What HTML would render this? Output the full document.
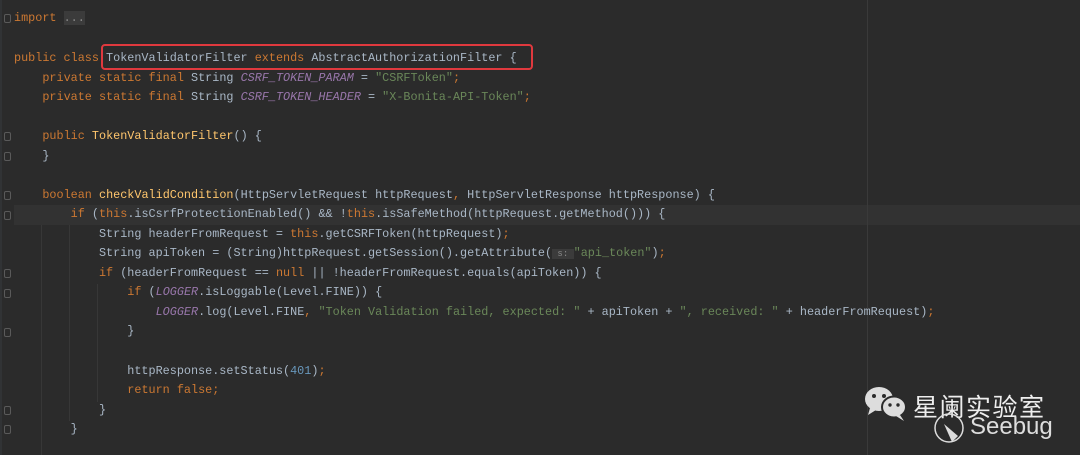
<!DOCTYPE html>
<html><head><meta charset="utf-8"><style>
body{margin:0;width:1080px;height:455px;background:#2b2b2b;overflow:hidden;position:relative;font-family:"Liberation Mono",monospace;font-size:11.8px;}
.l{position:absolute;left:14px;white-space:pre;color:#a9b7c6;height:19.6px;line-height:19.6px}
.k{color:#cc7832}.s{color:#6a8759}.c{color:#9876aa;font-style:italic}.m{color:#ffc66d}.n{color:#6897bb}
.g{position:absolute;width:1px;background:#373737}
.f{position:absolute;left:4px;width:7px;height:9px;border:1px solid #5a5a5a;border-radius:2px;box-sizing:border-box}
</style></head><body>
<div style="position:absolute;left:0;top:0;width:2px;height:455px;background:#313335"></div>
<div style="position:absolute;left:14px;top:205px;width:1066px;height:20px;background:#323232"></div>
<div class="g" style="left:867px;top:0;height:455px;background:#3a3a3a"></div>
<div class="g" style="left:41px;top:225px;height:230px"></div>
<div class="g" style="left:69px;top:225px;height:196px"></div>
<div class="g" style="left:97px;top:284px;height:118px"></div>
<div class="f" style="top:14px"></div>
<div class="f" style="top:132px"></div><div class="f" style="top:152px"></div>
<div class="f" style="top:191px"></div><div class="f" style="top:211px"></div>
<div class="f" style="top:269px"></div><div class="f" style="top:289px"></div>
<div class="f" style="top:328px"></div><div class="f" style="top:406px"></div><div class="f" style="top:425px"></div>
<div class="l" style="top:9px"><span class="k">import</span> <span style="background:#3b3b3b;color:#888">...</span></div>
<div class="l" style="top:49px"><span class="k">public class</span> TokenValidatorFilter <span class="k">extends</span> AbstractAuthorizationFilter {</div>
<div class="l" style="top:69px">    <span class="k">private static final</span> String <span class="c">CSRF_TOKEN_PARAM</span> = <span class="s">"CSRFToken"</span><span class="k">;</span></div>
<div class="l" style="top:88px">    <span class="k">private static final</span> String <span class="c">CSRF_TOKEN_HEADER</span> = <span class="s">"X-Bonita-API-Token"</span><span class="k">;</span></div>
<div class="l" style="top:127px">    <span class="k">public</span> <span class="m">TokenValidatorFilter</span>() {</div>
<div class="l" style="top:147px">    }</div>
<div class="l" style="top:186px">    <span class="k">boolean</span> <span class="m">checkValidCondition</span>(HttpServletRequest httpRequest<span class="k">,</span> HttpServletResponse httpResponse) {</div>
<div class="l" style="top:205px">        <span class="k">if</span> (<span class="k">this</span>.isCsrfProtectionEnabled() &amp;&amp; !<span class="k">this</span>.isSafeMethod(httpRequest.getMethod())) {</div>
<div class="l" style="top:225px">            String headerFromRequest = <span class="k">this</span>.getCSRFToken(httpRequest)<span class="k">;</span></div>
<div class="l" style="top:244px">            String apiToken = (String)httpRequest.getSession().getAttribute(<span style="background:#3b3b3b;color:#888;font-size:9px"> s: </span><span class="s">"api_token"</span>)<span class="k">;</span></div>
<div class="l" style="top:264px">            <span class="k">if</span> (headerFromRequest == <span class="k">null</span> || !headerFromRequest.equals(apiToken)) {</div>
<div class="l" style="top:283px">                <span class="k">if</span> (<span class="c">LOGGER</span>.isLoggable(Level.FINE)) {</div>
<div class="l" style="top:303px">                    <span class="c">LOGGER</span>.log(Level.FINE<span class="k">,</span> <span class="s">"Token Validation failed, expected: "</span> + apiToken + <span class="s">", received: "</span> + headerFromRequest)<span class="k">;</span></div>
<div class="l" style="top:322px">                }</div>
<div class="l" style="top:362px">                httpResponse.setStatus(<span class="n">401</span>)<span class="k">;</span></div>
<div class="l" style="top:381px">                <span class="k">return false;</span></div>
<div class="l" style="top:401px">            }</div>
<div class="l" style="top:420px">        }</div>
<div style="position:absolute;left:101px;top:44px;width:432px;height:26px;border:2px solid #e0393e;border-radius:4px;box-sizing:border-box"></div>
<svg style="position:absolute;left:862px;top:385px" width="56" height="40" viewBox="0 0 56 40">
<ellipse cx="17" cy="14" rx="14" ry="12" fill="#ddd"/><path d="M8 23 L6 30 L14 25Z" fill="#ddd"/>
<ellipse cx="32" cy="22" rx="12" ry="10.5" fill="#ddd" stroke="#2b2b2b" stroke-width="2"/><path d="M38 30 L42 36 L34 31Z" fill="#ddd"/>
<circle cx="12" cy="11" r="2" fill="#2b2b2b"/><circle cx="22" cy="11" r="2" fill="#2b2b2b"/>
<circle cx="28" cy="20" r="1.7" fill="#2b2b2b"/><circle cx="36" cy="20" r="1.7" fill="#2b2b2b"/></svg>
<div style="position:absolute;left:913px;top:391px;color:#eee;font-family:'Noto Sans CJK SC',sans-serif;font-size:25px;line-height:30px;letter-spacing:1.5px">星阑实验室</div>
<svg style="position:absolute;left:932px;top:410px" width="40" height="40" viewBox="0 0 40 40"><circle cx="17" cy="18" r="14" fill="none" stroke="#ddd" stroke-width="1.5"/><path d="M12 14 L26 26 L20 32 Z" fill="#ddd"/></svg>
<div style="position:absolute;left:970px;top:414px;color:#ddd;font-family:'Liberation Sans',sans-serif;font-size:24px;line-height:26px">Seebug</div>
</body></html>
